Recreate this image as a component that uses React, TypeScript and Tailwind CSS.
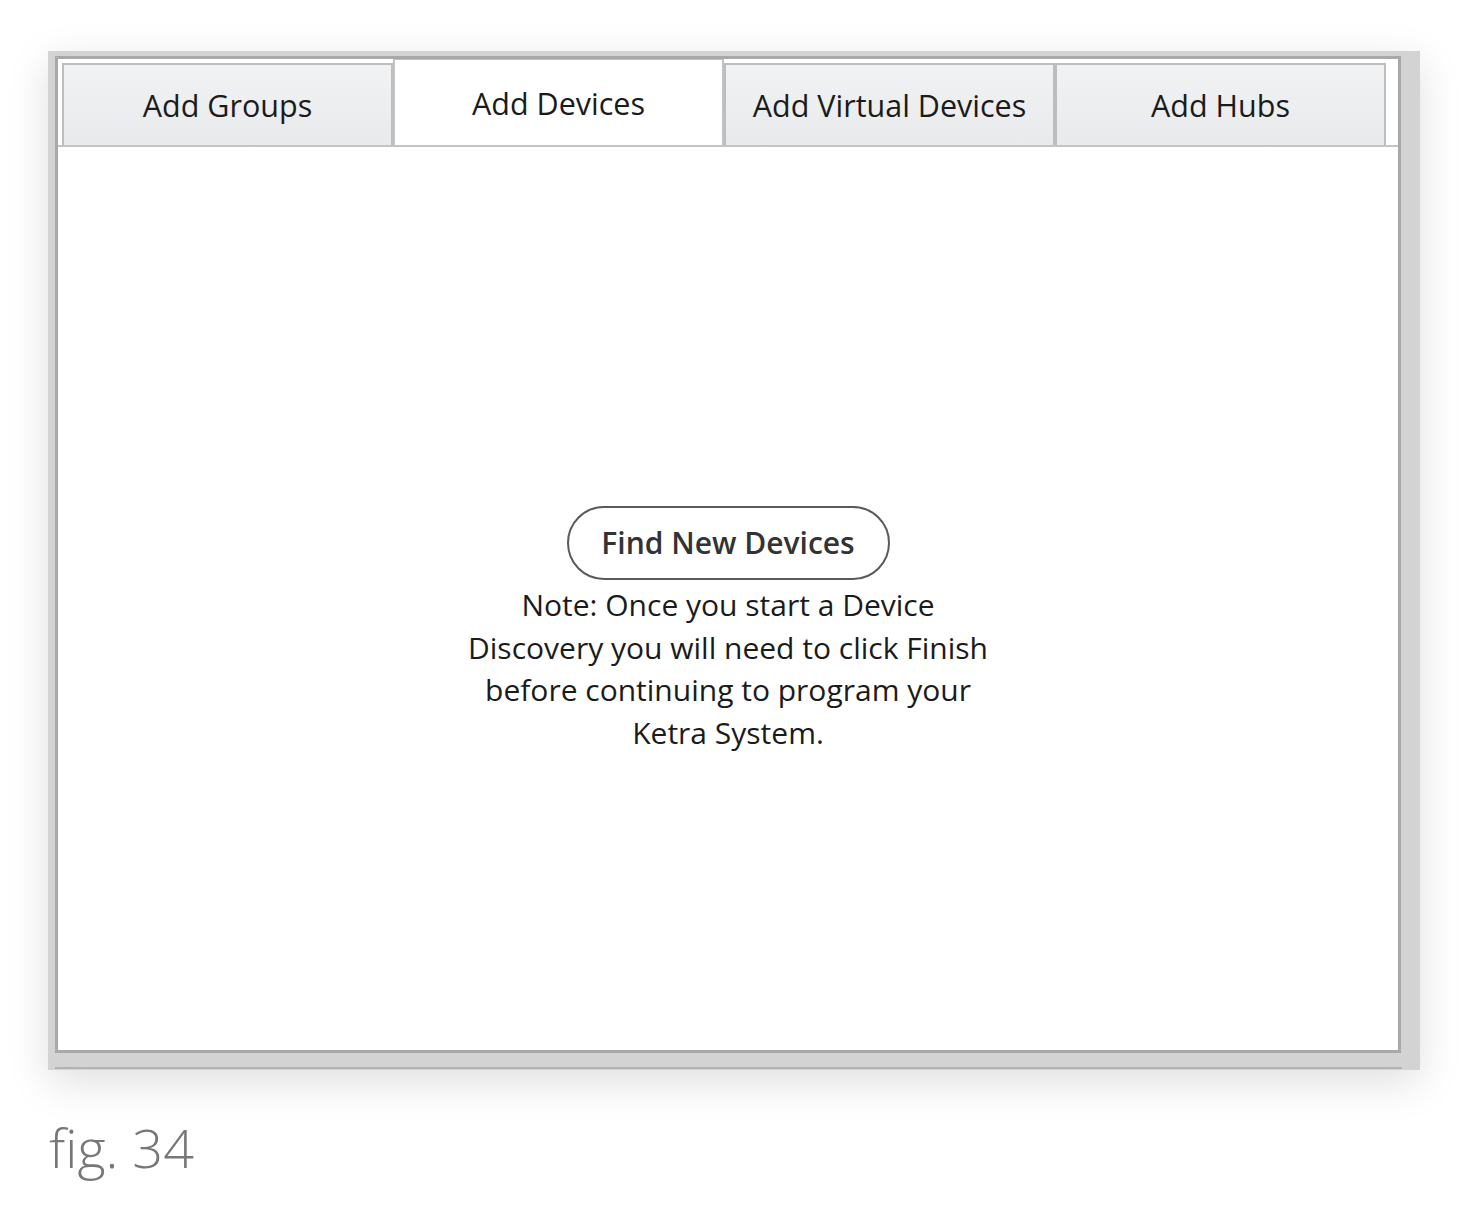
const tabs = ["Add Groups", "Add Devices", "Add Virtual Devices", "Add Hubs"]

export default function App() {
  const active = 1

  return (
    <div className="min-h-[1218px] w-[1478px] bg-white pl-[48px] pt-[51px]">
      {/* window frame */}
      <div className="w-[1372px] bg-[#d3d3d3] pl-[7px] pt-[5px] pr-[19px] pb-[1px] shadow-[0_12px_40px_rgba(0,0,0,0.13)]">
        <div className="flex h-[997px] flex-col border-[3px] border-[#a9a9a9] bg-white">
          {/* tab strip */}
          <div className="flex items-end border-b-2 border-[#c4c4c4] pl-[4px]">
            {tabs.map((tab, i) =>
              i === active ? (
                <div
                  key={tab}
                  className="flex h-[86px] w-[331px] items-center justify-center border-x-2 border-t border-[#c2c2c2] bg-white pt-[3px] text-[30.5px] text-[#1b1b1b]"
                  style={{ fontFamily: '"Open Sans", "Noto Sans", sans-serif' }}
                >
                  {tab}
                </div>
              ) : (
                <div
                  key={tab}
                  className="flex h-[82px] w-[331px] items-center justify-center border-x-2 border-t-2 border-[#bdbdbd] bg-gradient-to-b from-[#f1f2f3] to-[#e9eaeb] pt-[2px] text-[30.5px] text-[#1b1b1b]"
                  style={{ fontFamily: '"Open Sans", "Noto Sans", sans-serif' }}
                >
                  {tab}
                </div>
              )
            )}
          </div>

          {/* body */}
          <div
            className="flex flex-1 flex-col items-center pt-[359px] text-[#1b1b1b]"
            style={{ fontFamily: '"Open Sans", "Noto Sans", sans-serif' }}
          >
            <button className="flex h-[74px] w-[323px] items-center justify-center rounded-full border-2 border-[#5a5a5a] bg-white pb-[2px] text-[30px] font-semibold text-[#333]">
              Find New Devices
            </button>
            <p className="mt-[4px] text-center text-[30px] leading-[42.5px]">
              Note: Once you start a Device
              <br />
              Discovery you will need to click Finish
              <br />
              before continuing to program your
              <br />
              Ketra System.
            </p>
          </div>
        </div>
        <div className="mt-[14px] h-[2px] w-[1347px] bg-[#b3b3b3]" />
      </div>

      <div
        className="mt-[50px] pl-[1px] text-[54px] font-light leading-none text-[#777]"
        style={{ fontFamily: '"Open Sans", "Lato", sans-serif' }}
      >
        fig. 34
      </div>
    </div>
  )
}
